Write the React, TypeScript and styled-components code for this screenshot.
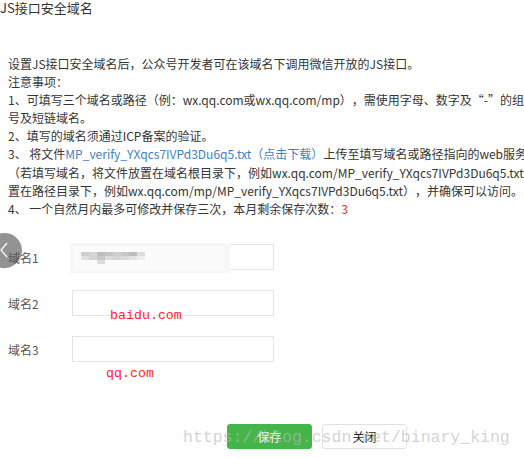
import React from "react";
import styled, { createGlobalStyle } from "styled-components";

const GlobalStyle = createGlobalStyle`
  html, body {
    margin: 0;
    padding: 0;
    background: #fff;
    overflow: hidden;
  }
  body {
    font-family: "Noto Sans CJK SC", "Noto Sans", sans-serif;
    color: #353535;
    text-spacing-trim: space-all;
  }
`;

const Page = styled.div`
  position: relative;
  width: 524px;
  height: 458px;
  overflow: hidden;
  background: #fff;
`;

const Title = styled.h3`
  margin: 0;
  height: 16px;
  font-size: 13px;
  font-weight: normal;
  line-height: 16px;
  color: #333;
`;

const Notice = styled.div`
  margin-top: 39px;
  padding-left: 8px;
  font-size: 12px;
  line-height: 18.1px;
  white-space: nowrap;
  color: #353535;
`;

const Line = styled.div``;

const Link = styled.span`
  color: #3f7fc7;
`;

const Count = styled.span`
  color: #e8262b;
`;

const Form = styled.div`
  margin-top: 27px;
  display: flex;
  flex-direction: column;
  gap: 21px;
`;

const Row = styled.div`
  position: relative;
  display: flex;
  align-items: center;
  height: 25px;
`;

const Label = styled.label`
  width: 64px;
  padding-left: 8px;
  font-size: 12px;
  color: #555;
  position: relative;
  z-index: 2;
`;

const Input = styled.div`
  position: relative;
  width: 200px;
  height: 24px;
  border: 1px solid #e4e4e8;
  background: #fff;
`;

const Mosaic = styled.svg`
  position: absolute;
  left: -3px;
  top: -2px;
`;

const Note = styled.span<{ $left: number; $top: number }>`
  position: absolute;
  left: ${(p) => p.$left}px;
  top: ${(p) => p.$top}px;
  font-family: "Liberation Mono", "DejaVu Sans Mono", monospace;
  font-size: 13.3px;
  line-height: 16px;
  color: #ff1f1f;
  z-index: 3;
`;

const BackCircle = styled.div`
  position: absolute;
  left: -13px;
  top: -12px;
  width: 35px;
  height: 35px;
  border-radius: 50%;
  background: rgba(120, 120, 120, 0.8);
  z-index: 1;
  svg {
    position: absolute;
    left: 13px;
    top: 9px;
  }
`;

const Actions = styled.div`
  margin-top: 62px;
  display: flex;
  gap: 10px;
  padding-left: 227px;
`;

const Button = styled.button<{ $primary?: boolean }>`
  width: 85px;
  height: 25px;
  border-radius: 3px;
  font-family: "Noto Sans CJK SC", sans-serif;
  font-size: 12px;
  line-height: 23px;
  padding: 0;
  cursor: pointer;
  border: 1px solid ${(p) => (p.$primary ? "#44b549" : "#e1e1e1")};
  background: ${(p) => (p.$primary ? "#44b549" : "#fff")};
  color: ${(p) => (p.$primary ? "#fff" : "#222")};
`;

const Watermark = styled.div`
  position: absolute;
  left: 183px;
  top: 428px;
  font-family: "Liberation Mono", "DejaVu Sans Mono", monospace;
  font-size: 16.5px;
  line-height: 20px;
  color: rgba(185, 185, 185, 0.65);
  white-space: nowrap;
  pointer-events: none;
`;

const blocks: [number, number, string][] = [
  [0, 0, "#cfcfcf"], [1, 0, "#d8d8d8"], [2, 0, "#bdbdbd"], [3, 0, "#c6c6c6"],
  [4, 0, "#d0d0d0"], [5, 0, "#c8c8c8"], [6, 0, "#bcbcbc"], [7, 0, "#dedede"],
  [0, 1, "#e2e2e2"], [1, 1, "#d5d5d5"], [2, 1, "#c9c9c9"], [3, 1, "#dcdcdc"],
  [4, 1, "#d6d6d6"], [5, 1, "#dadada"], [6, 1, "#e4e4e4"], [7, 1, "#eeeeee"],
  [2, 2, "#dcdcdc"],
];

const App = () => {
  return (
    <Page>
      <GlobalStyle />
      <Title>JS接口安全域名</Title>
      <Notice>
        <Line>设置JS接口安全域名后，公众号开发者可在该域名下调用微信开放的JS接口。</Line>
        <Line>注意事项：</Line>
        <Line>1、可填写三个域名或路径（例：wx.qq.com或wx.qq.com/mp），需使用字母、数字及“-”的组合</Line>
        <Line>号及短链域名。</Line>
        <Line>2、填写的域名须通过ICP备案的验证。</Line>
        <Line>
          3、 将文件<Link>MP_verify_YXqcs7IVPd3Du6q5.txt（点击下载）</Link>上传至填写域名或路径指向的web服务器
        </Line>
        <Line>（若填写域名，将文件放置在域名根目录下，例如wx.qq.com/MP_verify_YXqcs7IVPd3Du6q5.txt；若填写路径，将文件放</Line>
        <Line>置在路径目录下，例如wx.qq.com/mp/MP_verify_YXqcs7IVPd3Du6q5.txt），并确保可以访问。</Line>
        <Line>
          4、 一个自然月内最多可修改并保存三次，本月剩余保存次数：<Count>3</Count>
        </Line>
      </Notice>

      <Form>
        <Row>
          <BackCircle>
            <svg width="8" height="16" viewBox="0 0 8 16">
              <path d="M7 1 L1 8 L7 15" fill="none" stroke="#fff" strokeWidth="1.2" />
            </svg>
          </BackCircle>
          <Label>域名1</Label>
          <Input>
            <Mosaic width="160" height="30">
              <rect x="0" y="0" width="160" height="30" fill="#f7f7f7" />
              <rect x="4" y="3" width="150" height="24" fill="#fbfbfb" />
              {blocks.map(([cx, cy, c], i) => (
                <rect key={i} x={11 + cx * 8} y={9 + cy * 4} width="8" height="4" fill={c} />
              ))}
            </Mosaic>
          </Input>
        </Row>
        <Row>
          <Label>域名2</Label>
          <Input />
          <Note $left={110} $top={17}>baidu.com</Note>
        </Row>
        <Row>
          <Label>域名3</Label>
          <Input />
          <Note $left={106} $top={29}>qq.com</Note>
        </Row>
      </Form>

      <Actions>
        <Button $primary>保存</Button>
        <Button>关闭</Button>
      </Actions>
      <Watermark>https://blog.csdn.net/binary_king</Watermark>
    </Page>
  );
};

export default App;
